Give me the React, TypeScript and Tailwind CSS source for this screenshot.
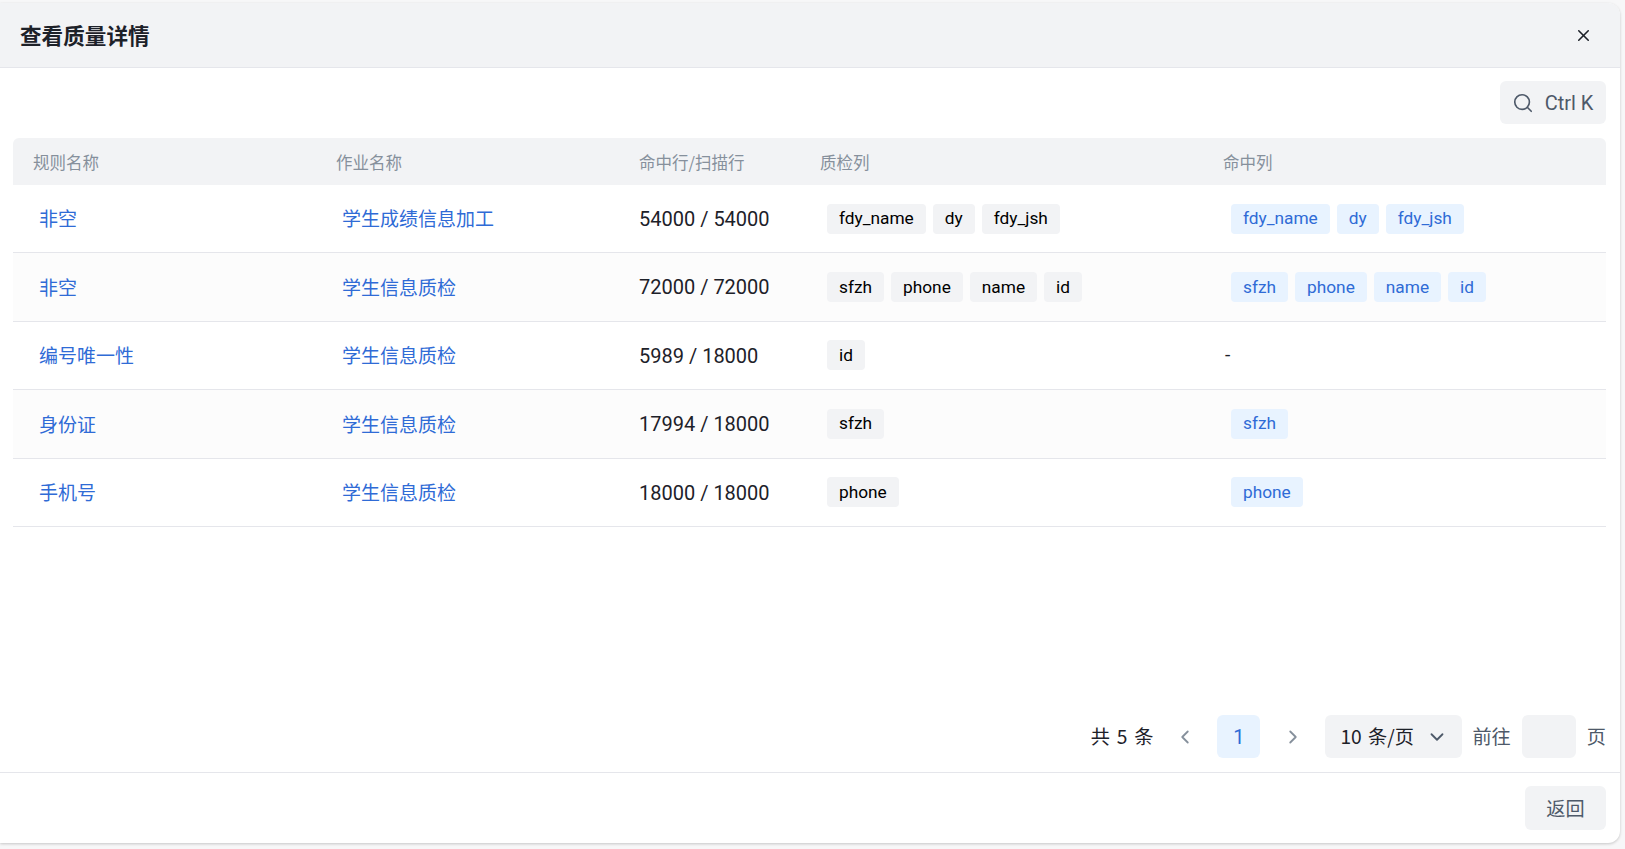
import React from 'react';
import { ChevronDown, ChevronLeft, ChevronRight, Search, X } from 'lucide-react';

interface Row {
  rule: string;
  job: string;
  hits: string;
  checked: string[];
  matched: string[];
}

const rows: Row[] = [
  { rule: '非空', job: '学生成绩信息加工', hits: '54000 / 54000', checked: ['fdy_name', 'dy', 'fdy_jsh'], matched: ['fdy_name', 'dy', 'fdy_jsh'] },
  { rule: '非空', job: '学生信息质检', hits: '72000 / 72000', checked: ['sfzh', 'phone', 'name', 'id'], matched: ['sfzh', 'phone', 'name', 'id'] },
  { rule: '编号唯一性', job: '学生信息质检', hits: '5989 / 18000', checked: ['id'], matched: [] },
  { rule: '身份证', job: '学生信息质检', hits: '17994 / 18000', checked: ['sfzh'], matched: ['sfzh'] },
  { rule: '手机号', job: '学生信息质检', hits: '18000 / 18000', checked: ['phone'], matched: ['phone'] }
];

const gridCols = 'grid grid-cols-[303px_303px_181px_403px_403px]';
const latin = "font-['Roboto','Noto_Sans_CJK_SC',sans-serif]";

const App: React.FC = () => {
  return (
    <div className="h-[849px] w-[1625px] overflow-hidden bg-[#f7f7f8] pt-[3px] pr-[5px] pb-[6px] font-['Noto_Sans_CJK_SC','Roboto',sans-serif] text-[19.2px] text-[#1d2129]">
      <div className="flex h-full flex-col overflow-hidden rounded-br-xl rounded-tr-xl bg-white shadow-[0_1px_3px_rgba(0,0,0,0.2)]">
        {/* Header */}
        <div className="flex h-[65px] shrink-0 items-center justify-between border-b border-[#e5e6eb] bg-[#f2f3f5] pl-5 pr-[27px]">
          <h2 className="text-[21.6px] font-bold text-[#1d2129]">查看质量详情</h2>
          <X size={19} strokeWidth={2} className="mt-[1px] text-[#1d2129]" />
        </div>

        {/* Body */}
        <div className="flex min-h-0 flex-1 flex-col pl-[13px] pr-[14px]">
          <div className="flex justify-end pt-[13px] pb-[14px]">
            <button className="flex h-[43px] w-[106px] items-center justify-center gap-[11px] rounded-md bg-[#f2f3f5] pr-[1px] text-[#4e5969]">
              <Search size={22} strokeWidth={1.8} />
              <span className={`${latin} text-[20px]`}>Ctrl K</span>
            </button>
          </div>

          <div className={`${gridCols} h-[47px] items-center rounded-t-md bg-[#f2f3f5] pt-[1px] text-[16.5px] text-[#86909c]`}>
            <div className="pl-5">规则名称</div>
            <div className="pl-5">作业名称</div>
            <div className="pl-5">命中行/扫描行</div>
            <div className="pl-5">质检列</div>
            <div className="pl-5">命中列</div>
          </div>

          {rows.map((row, i) => (
            <div
              key={i}
              className={`${gridCols} h-[68.4px] items-center border-b border-[#e5e6eb] ${i % 2 === 1 ? 'bg-[#fcfcfc]' : 'bg-white'}`}
            >
              <div className="pl-[26px] text-[19px] text-[#2f6bd6]">{row.rule}</div>
              <div className="pl-[26px] text-[19px] text-[#2f6bd6]">{row.job}</div>
              <div className={`${latin} pl-5 pt-[0.5px] text-[20px]`}>{row.hits}</div>
              <div className={`${latin} flex gap-[7px] pl-[27px]`}>
                {row.checked.map((c) => (
                  <span key={c} className="flex h-[30px] items-center rounded-[4px] bg-[#f2f3f5] px-3 pt-[1px] text-[17.3px] text-black">{c}</span>
                ))}
              </div>
              <div className={`${latin} flex gap-[7px] pl-[28px]`}>
                {row.matched.length === 0 && <span className="-ml-[6px]">-</span>}
                {row.matched.map((c) => (
                  <span key={c} className="flex h-[30px] items-center rounded-[4px] bg-[#e8f3ff] px-3 pt-[1px] text-[17.3px] text-[#2f6bd6]">{c}</span>
                ))}
              </div>
            </div>
          ))}

          {/* Pagination */}
          <div className="mt-auto flex h-[57px] items-start justify-end">
            <div className="flex h-[43px] items-center">
              <span className="mr-[21px] [word-spacing:2.5px]">共 5 条</span>
              <ChevronLeft size={22} className="mr-[21px] text-[#86909c]" />
              <span className={`${latin} flex h-[43px] w-[43px] items-center justify-center rounded-md bg-[#e8f3ff] text-[20px] text-[#2f6bd6]`}>1</span>
              <ChevronRight size={22} className="ml-[22px] mr-[21px] text-[#86909c]" />
              <div className="flex h-[43px] w-[137px] items-center justify-between rounded-md bg-[#f2f3f5] pl-[15px] pr-[14px]">
                <span className="[word-spacing:2px]">10 条/页</span>
                <ChevronDown size={22} className="text-[#4e5969]" />
              </div>
              <span className="ml-[10px] text-[#4e5969]">前往</span>
              <div className="ml-[11px] h-[43px] w-[54px] rounded-md bg-[#f2f3f5]" />
              <span className="ml-[11px] text-[#4e5969]">页</span>
            </div>
          </div>
        </div>

        {/* Footer */}
        <div className="flex h-[71px] shrink-0 items-start justify-end border-t border-[#e5e6eb] pr-[14px] pt-[13px]">
          <button className="h-[44px] w-[81px] rounded-md bg-[#f2f3f5] text-[#4e5969]">返回</button>
        </div>
      </div>
    </div>
  );
};

export default App;
